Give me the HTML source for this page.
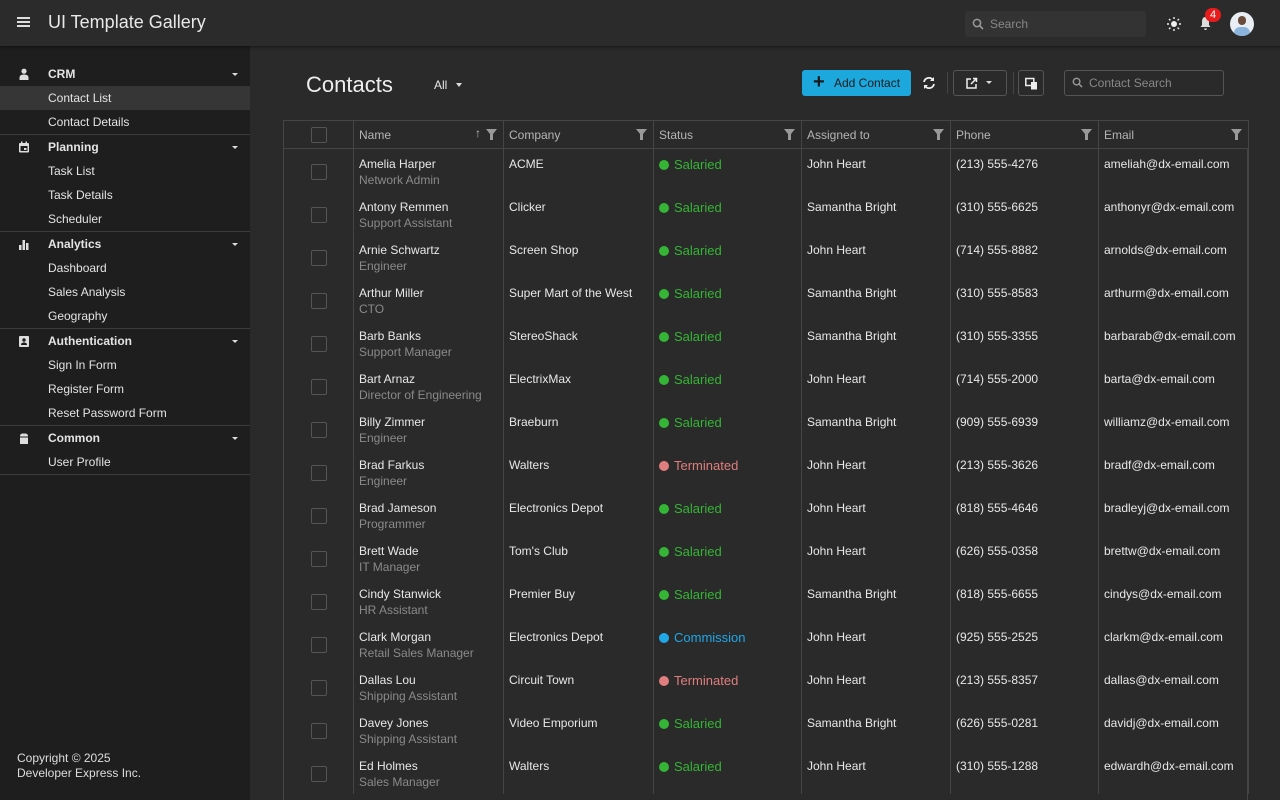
<!DOCTYPE html>
<html><head><meta charset="utf-8"><style>
*{box-sizing:border-box;margin:0;padding:0}
body{width:1280px;height:800px;overflow:hidden;background:#2a2a2a;font-family:"Liberation Sans",sans-serif;color:#e8e8e8;font-size:12px;position:relative}
.top{position:absolute;left:0;top:0;width:1280px;height:46px;background:#2b2b2b;box-shadow:0 1px 3px rgba(0,0,0,.5);z-index:2}
.side{position:absolute;left:0;top:46px;width:250px;height:754px;background:#1e1e1e}
.grp{border-bottom:1px solid #3c3c3c}
.row{height:24px;line-height:24px;padding-left:48px;position:relative;font-size:12px;color:#e4e4e4}
.hdr{font-weight:bold}
.sel{background:#363636}
.caret{position:absolute;right:12px;top:11px;border-left:3px solid transparent;border-right:3px solid transparent;border-top:3px solid #ddd}
.ic{position:absolute;left:18px;top:6px;width:12px;height:12px}
table{position:absolute;left:283px;top:120px;border-collapse:collapse;table-layout:fixed;width:965px}
th{height:28px;border:1px solid #454545;text-align:left;font-weight:normal;color:#b5b5b5;padding-left:5px;position:relative;font-size:12px}
td{border-left:1px solid #454545;border-right:1px solid #454545;vertical-align:top;padding:7px 5px 0;height:43px;font-size:12px;line-height:16px}
.sub{color:#8a8a8a}
.cb{width:16px;height:16px;border:1px solid #555;border-radius:2px;margin:8px auto 0}
td.st{padding-top:8px;font-size:13px}
.dot{display:inline-block;width:10px;height:10px;border-radius:50%;margin-right:5px;vertical-align:-1px}
.g{color:#35b535}.g .dot{background:#35b535}
.r{color:#e07e7e}.r .dot{background:#e07e7e}
.b{color:#1fa7e8}.b .dot{background:#1fa7e8}
.fil{position:absolute;right:6px;top:8px;width:11px;height:11px}
</style></head><body>
<div class="top">
 <div style="position:absolute;left:17px;top:17px;width:13px;height:2px;background:#ddd;box-shadow:0 4px 0 #ddd,0 8px 0 #ddd"></div>
 <div style="position:absolute;left:48px;top:12px;font-size:18px;color:#e8e8e8">UI Template Gallery</div>
 <div style="position:absolute;left:965px;top:11px;width:181px;height:26px;background:#333;border-radius:3px;color:#888;line-height:26px;padding-left:25px;font-size:12px">Search
  <svg style="position:absolute;left:7px;top:7px" width="12" height="12" viewBox="0 0 12 12"><circle cx="5" cy="5" r="3.6" stroke="#999" stroke-width="1.5" fill="none"/><path d="M7.5 7.5L11 11" stroke="#999" stroke-width="1.6"/></svg></div>
 <svg style="position:absolute;left:1167px;top:17px" width="14" height="14" viewBox="0 0 14 14"><circle cx="7" cy="7" r="3" fill="#eee"/><g stroke="#eee" stroke-width="1.4"><path d="M7 0v2M7 12v2M0 7h2M12 7h2M2 2l1.4 1.4M10.6 10.6L12 12M2 12l1.4-1.4M10.6 3.4L12 2"/></g></svg>
 <svg style="position:absolute;left:1199px;top:16px" width="13" height="15" viewBox="0 0 13 15"><path d="M6.5 1C3.8 1 3 3.5 3 5.5V9L1.5 11h10L10 9V5.5C10 3.5 9.2 1 6.5 1z M5 12.5h3a1.5 1.5 0 0 1-3 0z" fill="#ddd"/></svg>
 <div style="position:absolute;left:1205px;top:8px;width:16px;height:14px;border-radius:7px;background:#e81c1c;color:#fff;font-size:11px;text-align:center;line-height:14px">4</div>
 <div style="position:absolute;left:1230px;top:12px;width:24px;height:24px;border-radius:50%;background:#e8eef4;overflow:hidden"><div style="position:absolute;left:8px;top:4px;width:8px;height:9px;border-radius:4px;background:#6b4b3a"></div><div style="position:absolute;left:4px;top:15px;width:16px;height:10px;border-radius:6px 6px 0 0;background:#8ab4dc"></div></div>
</div>
<div class="side"><div style="height:16px"></div>
 <div class="grp"><div class="row hdr"><svg class="ic" viewBox="0 0 12 12"><circle cx="6" cy="3.2" r="2.6" fill="#ddd"/><path d="M1.5 12v-2.5c0-2 2-3 4.5-3s4.5 1 4.5 3V12z" fill="#ddd"/></svg>CRM<span class="caret"></span></div>
  <div class="row sel">Contact List</div><div class="row">Contact Details</div></div>
 <div class="grp"><div class="row hdr"><svg class="ic" viewBox="0 0 12 12"><rect x="1" y="2" width="10" height="9.5" rx="1" fill="#ddd"/><rect x="2.5" y="5" width="7" height="5" fill="#1e1e1e"/><rect x="6" y="7" width="2.5" height="2" fill="#ddd"/><rect x="3" y="0.5" width="1.5" height="2" fill="#ddd"/><rect x="7.5" y="0.5" width="1.5" height="2" fill="#ddd"/></svg>Planning<span class="caret"></span></div>
  <div class="row">Task List</div><div class="row">Task Details</div><div class="row">Scheduler</div></div>
 <div class="grp"><div class="row hdr"><svg class="ic" viewBox="0 0 12 12"><rect x="1" y="7" width="2.5" height="5" fill="#ddd"/><rect x="4.5" y="2" width="2.5" height="10" fill="#ddd"/><rect x="8" y="5" width="2.5" height="7" fill="#ddd"/></svg>Analytics<span class="caret"></span></div>
  <div class="row">Dashboard</div><div class="row">Sales Analysis</div><div class="row">Geography</div></div>
 <div class="grp"><div class="row hdr"><svg class="ic" viewBox="0 0 12 12"><rect x="1" y="1" width="10" height="11" rx="1" fill="#ddd"/><circle cx="6" cy="5" r="1.7" fill="#1e1e1e"/><path d="M3 10c0-2 1.5-2.5 3-2.5s3 .5 3 2.5z" fill="#1e1e1e"/></svg>Authentication<span class="caret"></span></div>
  <div class="row">Sign In Form</div><div class="row">Register Form</div><div class="row">Reset Password Form</div></div>
 <div class="grp"><div class="row hdr"><svg class="ic" viewBox="0 0 12 12"><path d="M2 4.5C2 2 3 1.5 6 1.5s4 .5 4 3V12H2z" fill="#ddd"/><rect x="1" y="4.5" width="10" height="1" fill="#1e1e1e"/></svg>Common<span class="caret"></span></div>
  <div class="row">User Profile</div></div>
 <div style="position:absolute;left:17px;top:705px;font-size:12px;line-height:15px;color:#ddd">Copyright © 2025<br>Developer Express Inc.</div>
</div>
<div style="position:absolute;left:306px;top:72px;font-size:22px;color:#eee">Contacts</div>
<div style="position:absolute;left:434px;top:78px;font-size:12px">All <span style="display:inline-block;margin-left:5px;border-left:3px solid transparent;border-right:3px solid transparent;border-top:4px solid #ddd;vertical-align:2px"></span></div>
<div style="position:absolute;left:802px;top:70px;width:109px;height:26px;background:#1ca8dd;border-radius:3px;color:#1a1a1a;font-size:12px;line-height:26px;padding-left:32px">Add Contact<span style="position:absolute;left:11px;top:0;font-size:20px;font-weight:bold;line-height:24px">+</span></div>
<svg style="position:absolute;left:922px;top:76px" width="14" height="14" viewBox="0 0 14 14"><path d="M2 6a5 5 0 0 1 9-2M12 8a5 5 0 0 1-9 2" stroke="#eee" stroke-width="1.8" fill="none"/><path d="M12 1v4H8zM2 13V9h4z" fill="#eee"/></svg>
<div style="position:absolute;left:947px;top:72px;width:1px;height:22px;background:#444"></div>
<div style="position:absolute;left:953px;top:70px;width:54px;height:26px;border:1px solid #555;border-radius:3px"><svg style="position:absolute;left:12px;top:6px" width="12" height="12" viewBox="0 0 12 12"><path d="M5 2H1v9h9V7" stroke="#eee" stroke-width="1.5" fill="none"/><path d="M5 7l5-5M7 1.5h3.5V5" stroke="#eee" stroke-width="1.5" fill="none"/></svg><span style="position:absolute;left:32px;top:10px;border-left:3px solid transparent;border-right:3px solid transparent;border-top:3px solid #ddd"></span></div>
<div style="position:absolute;left:1013px;top:72px;width:1px;height:22px;background:#444"></div>
<div style="position:absolute;left:1018px;top:70px;width:26px;height:26px;border:1px solid #555;border-radius:3px"><svg style="position:absolute;left:6px;top:6px" width="13" height="13" viewBox="0 0 13 13"><rect x="0.8" y="1.5" width="8" height="7" stroke="#eee" stroke-width="1.5" fill="none"/><rect x="6" y="5" width="6" height="7.5" fill="#eee"/></svg></div>
<div style="position:absolute;left:1064px;top:70px;width:160px;height:26px;border:1px solid #555;border-radius:3px;color:#888;font-size:12px;line-height:24px;padding-left:24px">Contact Search<svg style="position:absolute;left:7px;top:6px" width="11" height="11" viewBox="0 0 12 12"><circle cx="5" cy="5" r="3.6" stroke="#999" stroke-width="1.5" fill="none"/><path d="M7.5 7.5L11 11" stroke="#999" stroke-width="1.6"/></svg></div>
<div style="position:absolute;left:283px;top:148px;width:965px;height:652px;border-left:1px solid #454545;border-right:1px solid #454545"></div>
<table>
<colgroup><col style="width:70px"><col style="width:150px"><col style="width:150px"><col style="width:148px"><col style="width:149px"><col style="width:148px"><col style="width:150px"></colgroup>
<tr><th style="padding:0"><div class="cb" style="margin-top:0"></div></th><th>Name<span style="position:absolute;right:22px;top:5px;color:#bbb">↑</span><svg class="fil" viewBox="0 0 11 11"><path d="M0 0h11L7 5v6H4V5z" fill="#999"/></svg></th><th>Company<svg class="fil" viewBox="0 0 11 11"><path d="M0 0h11L7 5v6H4V5z" fill="#999"/></svg></th><th>Status<svg class="fil" viewBox="0 0 11 11"><path d="M0 0h11L7 5v6H4V5z" fill="#999"/></svg></th><th>Assigned to<svg class="fil" viewBox="0 0 11 11"><path d="M0 0h11L7 5v6H4V5z" fill="#999"/></svg></th><th>Phone<svg class="fil" viewBox="0 0 11 11"><path d="M0 0h11L7 5v6H4V5z" fill="#999"/></svg></th><th>Email<svg class="fil" viewBox="0 0 11 11"><path d="M0 0h11L7 5v6H4V5z" fill="#999"/></svg></th></tr>
<tr><td><div class="cb"></div></td><td>Amelia Harper<div class="sub">Network Admin</div></td><td>ACME</td><td class="st g"><span class="dot"></span>Salaried</td><td>John Heart</td><td>(213) 555-4276</td><td>ameliah@dx-email.com</td></tr>
<tr><td><div class="cb"></div></td><td>Antony Remmen<div class="sub">Support Assistant</div></td><td>Clicker</td><td class="st g"><span class="dot"></span>Salaried</td><td>Samantha Bright</td><td>(310) 555-6625</td><td>anthonyr@dx-email.com</td></tr>
<tr><td><div class="cb"></div></td><td>Arnie Schwartz<div class="sub">Engineer</div></td><td>Screen Shop</td><td class="st g"><span class="dot"></span>Salaried</td><td>John Heart</td><td>(714) 555-8882</td><td>arnolds@dx-email.com</td></tr>
<tr><td><div class="cb"></div></td><td>Arthur Miller<div class="sub">CTO</div></td><td>Super Mart of the West</td><td class="st g"><span class="dot"></span>Salaried</td><td>Samantha Bright</td><td>(310) 555-8583</td><td>arthurm@dx-email.com</td></tr>
<tr><td><div class="cb"></div></td><td>Barb Banks<div class="sub">Support Manager</div></td><td>StereoShack</td><td class="st g"><span class="dot"></span>Salaried</td><td>Samantha Bright</td><td>(310) 555-3355</td><td>barbarab@dx-email.com</td></tr>
<tr><td><div class="cb"></div></td><td>Bart Arnaz<div class="sub">Director of Engineering</div></td><td>ElectrixMax</td><td class="st g"><span class="dot"></span>Salaried</td><td>John Heart</td><td>(714) 555-2000</td><td>barta@dx-email.com</td></tr>
<tr><td><div class="cb"></div></td><td>Billy Zimmer<div class="sub">Engineer</div></td><td>Braeburn</td><td class="st g"><span class="dot"></span>Salaried</td><td>Samantha Bright</td><td>(909) 555-6939</td><td>williamz@dx-email.com</td></tr>
<tr><td><div class="cb"></div></td><td>Brad Farkus<div class="sub">Engineer</div></td><td>Walters</td><td class="st r"><span class="dot"></span>Terminated</td><td>John Heart</td><td>(213) 555-3626</td><td>bradf@dx-email.com</td></tr>
<tr><td><div class="cb"></div></td><td>Brad Jameson<div class="sub">Programmer</div></td><td>Electronics Depot</td><td class="st g"><span class="dot"></span>Salaried</td><td>John Heart</td><td>(818) 555-4646</td><td>bradleyj@dx-email.com</td></tr>
<tr><td><div class="cb"></div></td><td>Brett Wade<div class="sub">IT Manager</div></td><td>Tom's Club</td><td class="st g"><span class="dot"></span>Salaried</td><td>John Heart</td><td>(626) 555-0358</td><td>brettw@dx-email.com</td></tr>
<tr><td><div class="cb"></div></td><td>Cindy Stanwick<div class="sub">HR Assistant</div></td><td>Premier Buy</td><td class="st g"><span class="dot"></span>Salaried</td><td>Samantha Bright</td><td>(818) 555-6655</td><td>cindys@dx-email.com</td></tr>
<tr><td><div class="cb"></div></td><td>Clark Morgan<div class="sub">Retail Sales Manager</div></td><td>Electronics Depot</td><td class="st b"><span class="dot"></span>Commission</td><td>John Heart</td><td>(925) 555-2525</td><td>clarkm@dx-email.com</td></tr>
<tr><td><div class="cb"></div></td><td>Dallas Lou<div class="sub">Shipping Assistant</div></td><td>Circuit Town</td><td class="st r"><span class="dot"></span>Terminated</td><td>John Heart</td><td>(213) 555-8357</td><td>dallas@dx-email.com</td></tr>
<tr><td><div class="cb"></div></td><td>Davey Jones<div class="sub">Shipping Assistant</div></td><td>Video Emporium</td><td class="st g"><span class="dot"></span>Salaried</td><td>Samantha Bright</td><td>(626) 555-0281</td><td>davidj@dx-email.com</td></tr>
<tr><td><div class="cb"></div></td><td>Ed Holmes<div class="sub">Sales Manager</div></td><td>Walters</td><td class="st g"><span class="dot"></span>Salaried</td><td>John Heart</td><td>(310) 555-1288</td><td>edwardh@dx-email.com</td></tr>
</table>
</body></html>
